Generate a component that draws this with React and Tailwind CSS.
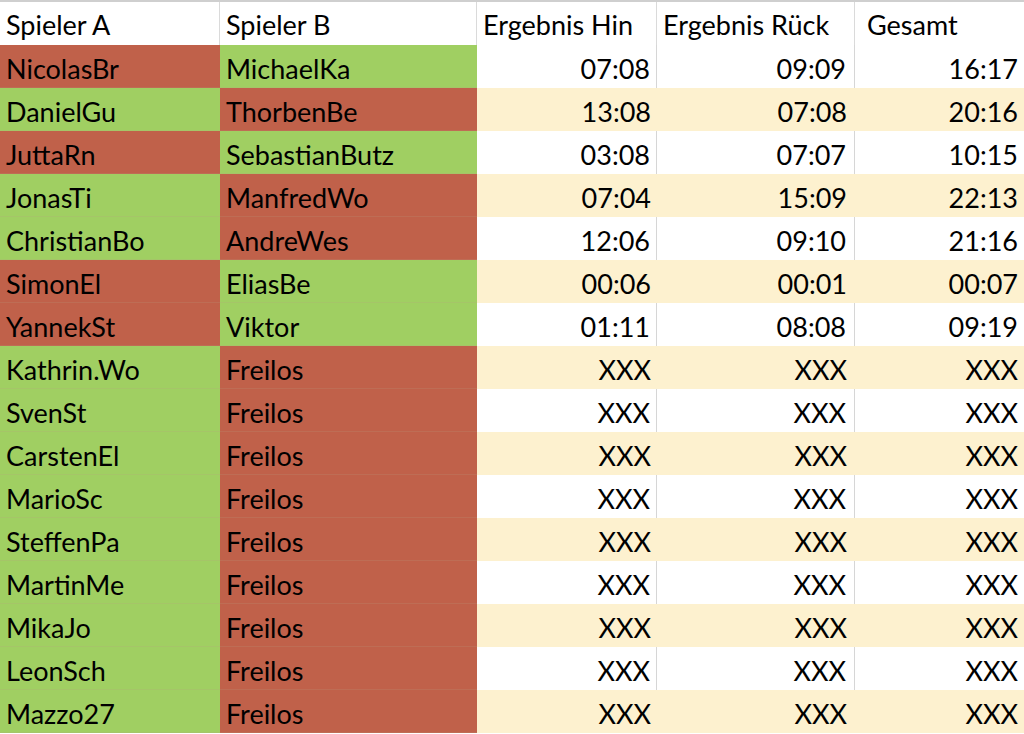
import React from 'react';

const RED = 'bg-[#c0614a]';
const GREEN = 'bg-[#a0cf62]';

const rows = [
    ['NicolasBr', 'r', 'MichaelKa', '07:08', '09:09', '16:17'],
    ['DanielGu', 'g', 'ThorbenBe', '13:08', '07:08', '20:16'],
    ['JuttaRn', 'r', 'SebastianButz', '03:08', '07:07', '10:15'],
    ['JonasTi', 'g', 'ManfredWo', '07:04', '15:09', '22:13'],
    ['ChristianBo', 'g', 'AndreWes', '12:06', '09:10', '21:16'],
    ['SimonEl', 'r', 'EliasBe', '00:06', '00:01', '00:07'],
    ['YannekSt', 'r', 'Viktor', '01:11', '08:08', '09:19'],
    ['Kathrin.Wo', 'g', 'Freilos', 'XXX', 'XXX', 'XXX'],
    ['SvenSt', 'g', 'Freilos', 'XXX', 'XXX', 'XXX'],
    ['CarstenEl', 'g', 'Freilos', 'XXX', 'XXX', 'XXX'],
    ['MarioSc', 'g', 'Freilos', 'XXX', 'XXX', 'XXX'],
    ['SteffenPa', 'g', 'Freilos', 'XXX', 'XXX', 'XXX'],
    ['MartinMe', 'g', 'Freilos', 'XXX', 'XXX', 'XXX'],
    ['MikaJo', 'g', 'Freilos', 'XXX', 'XXX', 'XXX'],
    ['LeonSch', 'g', 'Freilos', 'XXX', 'XXX', 'XXX'],
    ['Mazzo27', 'g', 'Freilos', 'XXX', 'XXX', 'XXX'],
];

const cols = 'grid grid-cols-[220px_257px_180px_198px_1fr]';

const App = () => {
    return (
        <div className="w-[1024px] h-[734px] overflow-hidden bg-white text-black text-[27px] leading-none border-t-2 border-[#cfcfcf]" style={{ fontFamily: 'Lato, "Open Sans", sans-serif' }}>
            {/* header */}
            <div className={`${cols} h-[43px]`}>
                <div className="flex items-center pl-[6px] pt-[1px] border-r border-[#dadada]">Spieler A</div>
                <div className="flex items-center pl-[6px] pt-[1px] border-r border-[#dadada]">Spieler B</div>
                <div className="flex items-center pl-[6px] pt-[1px] border-r border-[#dadada]">Ergebnis Hin</div>
                <div className="flex items-center pl-[6px] pt-[1px] border-r border-[#dadada]">Ergebnis Rück</div>
                <div className="flex items-center pl-[12px] pt-[1px]">Gesamt</div>
            </div>
            {rows.map(([a, c, b, hin, rueck, total], i) => {
                const aBg = c === 'r' ? RED : GREEN;
                const bBg = c === 'r' ? GREEN : RED;
                const cream = i % 2 === 1;
                const resBg = cream ? 'bg-[#fdf1cf]' : 'bg-white';
                const resBorder = cream ? '' : 'border-r border-[#d6d6d6]';
                return (
                    <div key={a} className={`${cols} h-[43px]`}>
                        <div className={`${aBg} flex items-center pl-[6px] pt-[4px] border-b border-[#b8a080]/20`}>{a}</div>
                        <div className={`${bBg} flex items-center pl-[6px] pt-[4px] border-b border-[#b8a080]/20`}>{b}</div>
                        <div className={`${resBg} ${resBorder} flex items-center justify-end pr-[6px] pt-[4px]`}>{hin}</div>
                        <div className={`${resBg} ${resBorder} flex items-center justify-end pr-[8px] pt-[4px]`}>{rueck}</div>
                        <div className={`${resBg} flex items-center justify-end pr-[6px] pt-[4px]`}>{total}</div>
                    </div>
                );
            })}
        </div>
    );
};

export default App;
